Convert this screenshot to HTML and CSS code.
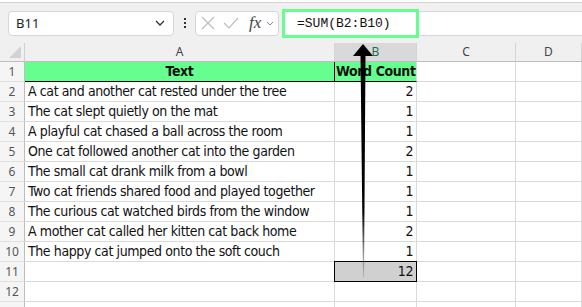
FILE: index.html
```
<!DOCTYPE html>
<html lang="en">
<head>
    <meta charset="UTF-8">
    <title>Word Count</title>
    <link rel="stylesheet" href="styles.css">
</head>
<body>
    <div class="topstrip"></div>

    <!-- Formula bar -->
    <div class="toolbar">
        <div class="namebox">
            <span>B11</span>
            <svg width="10" height="6" viewBox="0 0 10 6"><path d="M1 1 L5 5 L9 1" fill="none" stroke="#333" stroke-width="1.3"/></svg>
        </div>
        <div class="kebab"><i></i><i></i><i></i></div>
        <div class="fxbox">
            <svg width="14" height="14" viewBox="0 0 14 14"><path d="M1 1 L13 13 M13 1 L1 13" stroke="#bdbdbd" stroke-width="1.2"/></svg>
            <svg width="16" height="12" viewBox="0 0 16 12"><path d="M1 6 L6 11 L15 1" fill="none" stroke="#bdbdbd" stroke-width="1.2"/></svg>
            <span class="fx">fx</span>
            <svg width="8" height="5" viewBox="0 0 8 5"><path d="M1 1 L4 4 L7 1" fill="none" stroke="#888" stroke-width="1"/></svg>
        </div>
        <div class="formula">
            <div class="formula-hl">=SUM(B2:B10)</div>
        </div>
    </div>

    <!-- Sheet -->
    <div class="sheet">
        <div class="corner"><span class="tri"></span></div>
        <div class="ch">A</div>
        <div class="ch sel">B</div>
        <div class="ch">C</div>
        <div class="ch">D</div>

        <div class="rh">1</div>
        <div class="c hd">Text</div>
        <div class="c hd hdb">Word Count</div>
        <div class="c"></div><div class="c"></div>

        <div class="rh">2</div>
        <div class="c">A cat and another cat rested under the tree</div>
        <div class="c n">2</div><div class="c"></div><div class="c"></div>

        <div class="rh">3</div>
        <div class="c">The cat slept quietly on the mat</div>
        <div class="c n">1</div><div class="c"></div><div class="c"></div>

        <div class="rh">4</div>
        <div class="c">A playful cat chased a ball across the room</div>
        <div class="c n">1</div><div class="c"></div><div class="c"></div>

        <div class="rh">5</div>
        <div class="c">One cat followed another cat into the garden</div>
        <div class="c n">2</div><div class="c"></div><div class="c"></div>

        <div class="rh">6</div>
        <div class="c">The small cat drank milk from a bowl</div>
        <div class="c n">1</div><div class="c"></div><div class="c"></div>

        <div class="rh">7</div>
        <div class="c">Two cat friends shared food and played together</div>
        <div class="c n">1</div><div class="c"></div><div class="c"></div>

        <div class="rh">8</div>
        <div class="c">The curious cat watched birds from the window</div>
        <div class="c n">1</div><div class="c"></div><div class="c"></div>

        <div class="rh">9</div>
        <div class="c">A mother cat called her kitten cat back home</div>
        <div class="c n">2</div><div class="c"></div><div class="c"></div>

        <div class="rh">10</div>
        <div class="c">The happy cat jumped onto the soft couch</div>
        <div class="c n">1</div><div class="c"></div><div class="c"></div>

        <div class="rh">11</div>
        <div class="c"></div>
        <div class="c n total">12</div><div class="c"></div><div class="c"></div>

        <div class="rh">12</div>
        <div class="c"></div><div class="c"></div><div class="c"></div><div class="c"></div>

        <div class="rh"></div>
        <div class="c"></div><div class="c"></div><div class="c"></div><div class="c"></div>
    </div>

    <!-- Callout arrow -->
    <svg class="arrow" width="582" height="307" viewBox="0 0 582 307">
        <defs>
            <linearGradient id="fade" x1="0" y1="0" x2="0" y2="1">
                <stop offset="0" stop-color="#000"/>
                <stop offset="0.7" stop-color="#000"/>
                <stop offset="1" stop-color="#000" stop-opacity="0.1"/>
            </linearGradient>
        </defs>
        <path d="M360.5 55 L365.5 55 L364 278 L363 278 Z" fill="url(#fade)"/>
        <path d="M363 44 L373 56 L353 56 Z" fill="#000"/>
    </svg>
</body>
</html>
```

FILE: styles.css
```
body {
    margin: 0;
    background: #f0f0f0;
    font-family: "DejaVu Sans Condensed", "Liberation Sans Narrow", Roboto, sans-serif;
    position: relative;
    overflow: hidden;
    height: 307px;
}

.topstrip {
    height: 2px;
    background: #fff;
    border-bottom: 1px solid #d4d4d4;
}

.toolbar {
    display: flex;
    align-items: center;
    height: 40px;
    padding-left: 8px;
}

.namebox {
    width: 166px;
    height: 25px;
    box-sizing: border-box;
    background: #fff;
    border: 1px solid #d6d6d6;
    border-radius: 4px;
    display: flex;
    align-items: center;
    justify-content: space-between;
    padding: 0 8px 0 7px;
    font-family: "Noto Sans", sans-serif;
    font-size: 13px;
    color: #222;
}

.kebab {
    width: 21px;
    display: flex;
    flex-direction: column;
    align-items: center;
    gap: 2px;
}
.kebab i {
    width: 2px;
    height: 2px;
    background: #333;
}

.fxbox {
    width: 84px;
    height: 25px;
    box-sizing: border-box;
    background: #fff;
    border: 1px solid #d6d6d6;
    border-radius: 4px;
    display: flex;
    align-items: center;
    gap: 8px;
    padding-left: 5px;
}
.fx {
    font-family: "Liberation Serif", serif;
    font-style: italic;
    font-size: 17px;
    color: #444;
    margin-left: 2px;
    margin-right: -3px;
}

.formula {
    flex: 1;
    margin-left: 3px;
    height: 25px;
    background: #fff;
    border-top: 1px solid #d6d6d6;
    border-bottom: 1px solid #d6d6d6;
    box-sizing: border-box;
    position: relative;
}
.formula-hl {
    position: absolute;
    left: 0;
    top: -3px;
    width: 137px;
    height: 29px;
    box-sizing: border-box;
    border: 3px solid #66ff8f;
    background: #fff;
    font-family: "Liberation Mono", monospace;
    font-size: 13px;
    line-height: 23px;
    padding-left: 12px;
    color: #111;
}

.sheet {
    display: grid;
    grid-template-columns: 25px 310px 82px 99px 1fr;
    grid-template-rows: 19px repeat(13, 20px);
    background: #fff;
    font-size: 14px;
    letter-spacing: -0.4px;
    color: #111;
}

.corner {
    background: #f0f0f0;
    border-right: 1px solid #d0d0d0;
    border-bottom: 1px solid #bdbdbd;
    position: relative;
}
.tri {
    position: absolute;
    right: 3px;
    bottom: 3px;
    width: 0;
    height: 0;
    border-left: 12px solid transparent;
    border-bottom: 12px solid #d2d2d2;
}

.ch {
    background: #f0f0f0;
    border-right: 1px solid #d4d4d4;
    border-bottom: 1px solid #bdbdbd;
    text-align: center;
    font-family: "Noto Sans", sans-serif;
    font-size: 12px;
    letter-spacing: 0;
    line-height: 18px;
    color: #444;
}
.ch.sel {
    background: #d9d9d9;
    color: #1c6e4f;
}

.rh {
    background: #f5f5f5;
    border-right: 1px solid #bdbdbd;
    border-bottom: 1px solid #e0e0e0;
    text-align: center;
    font-family: "Noto Sans", sans-serif;
    font-size: 12px;
    letter-spacing: 0;
    line-height: 19px;
    color: #555;
}

.c {
    border-right: 1px solid #dadada;
    border-bottom: 1px solid #dadada;
    line-height: 19px;
    padding: 0 3px;
    white-space: nowrap;
    overflow: visible;
}
.c.n {
    text-align: right;
}
.c.hd {
    background: #66ff8f;
    font-weight: bold;
    text-align: center;
    border-bottom-color: #000;
}
.c.hdb {
    border-left: 1px solid #000;
    margin-left: -1px;
    padding: 0 1px;
}
.c.total {
    background: #d0d0d0;
    border: 1px solid #000;
    margin: -1px 0 0 -1px;
    line-height: 19px;
}

.arrow {
    position: absolute;
    left: 0;
    top: 0;
    pointer-events: none;
}
```
